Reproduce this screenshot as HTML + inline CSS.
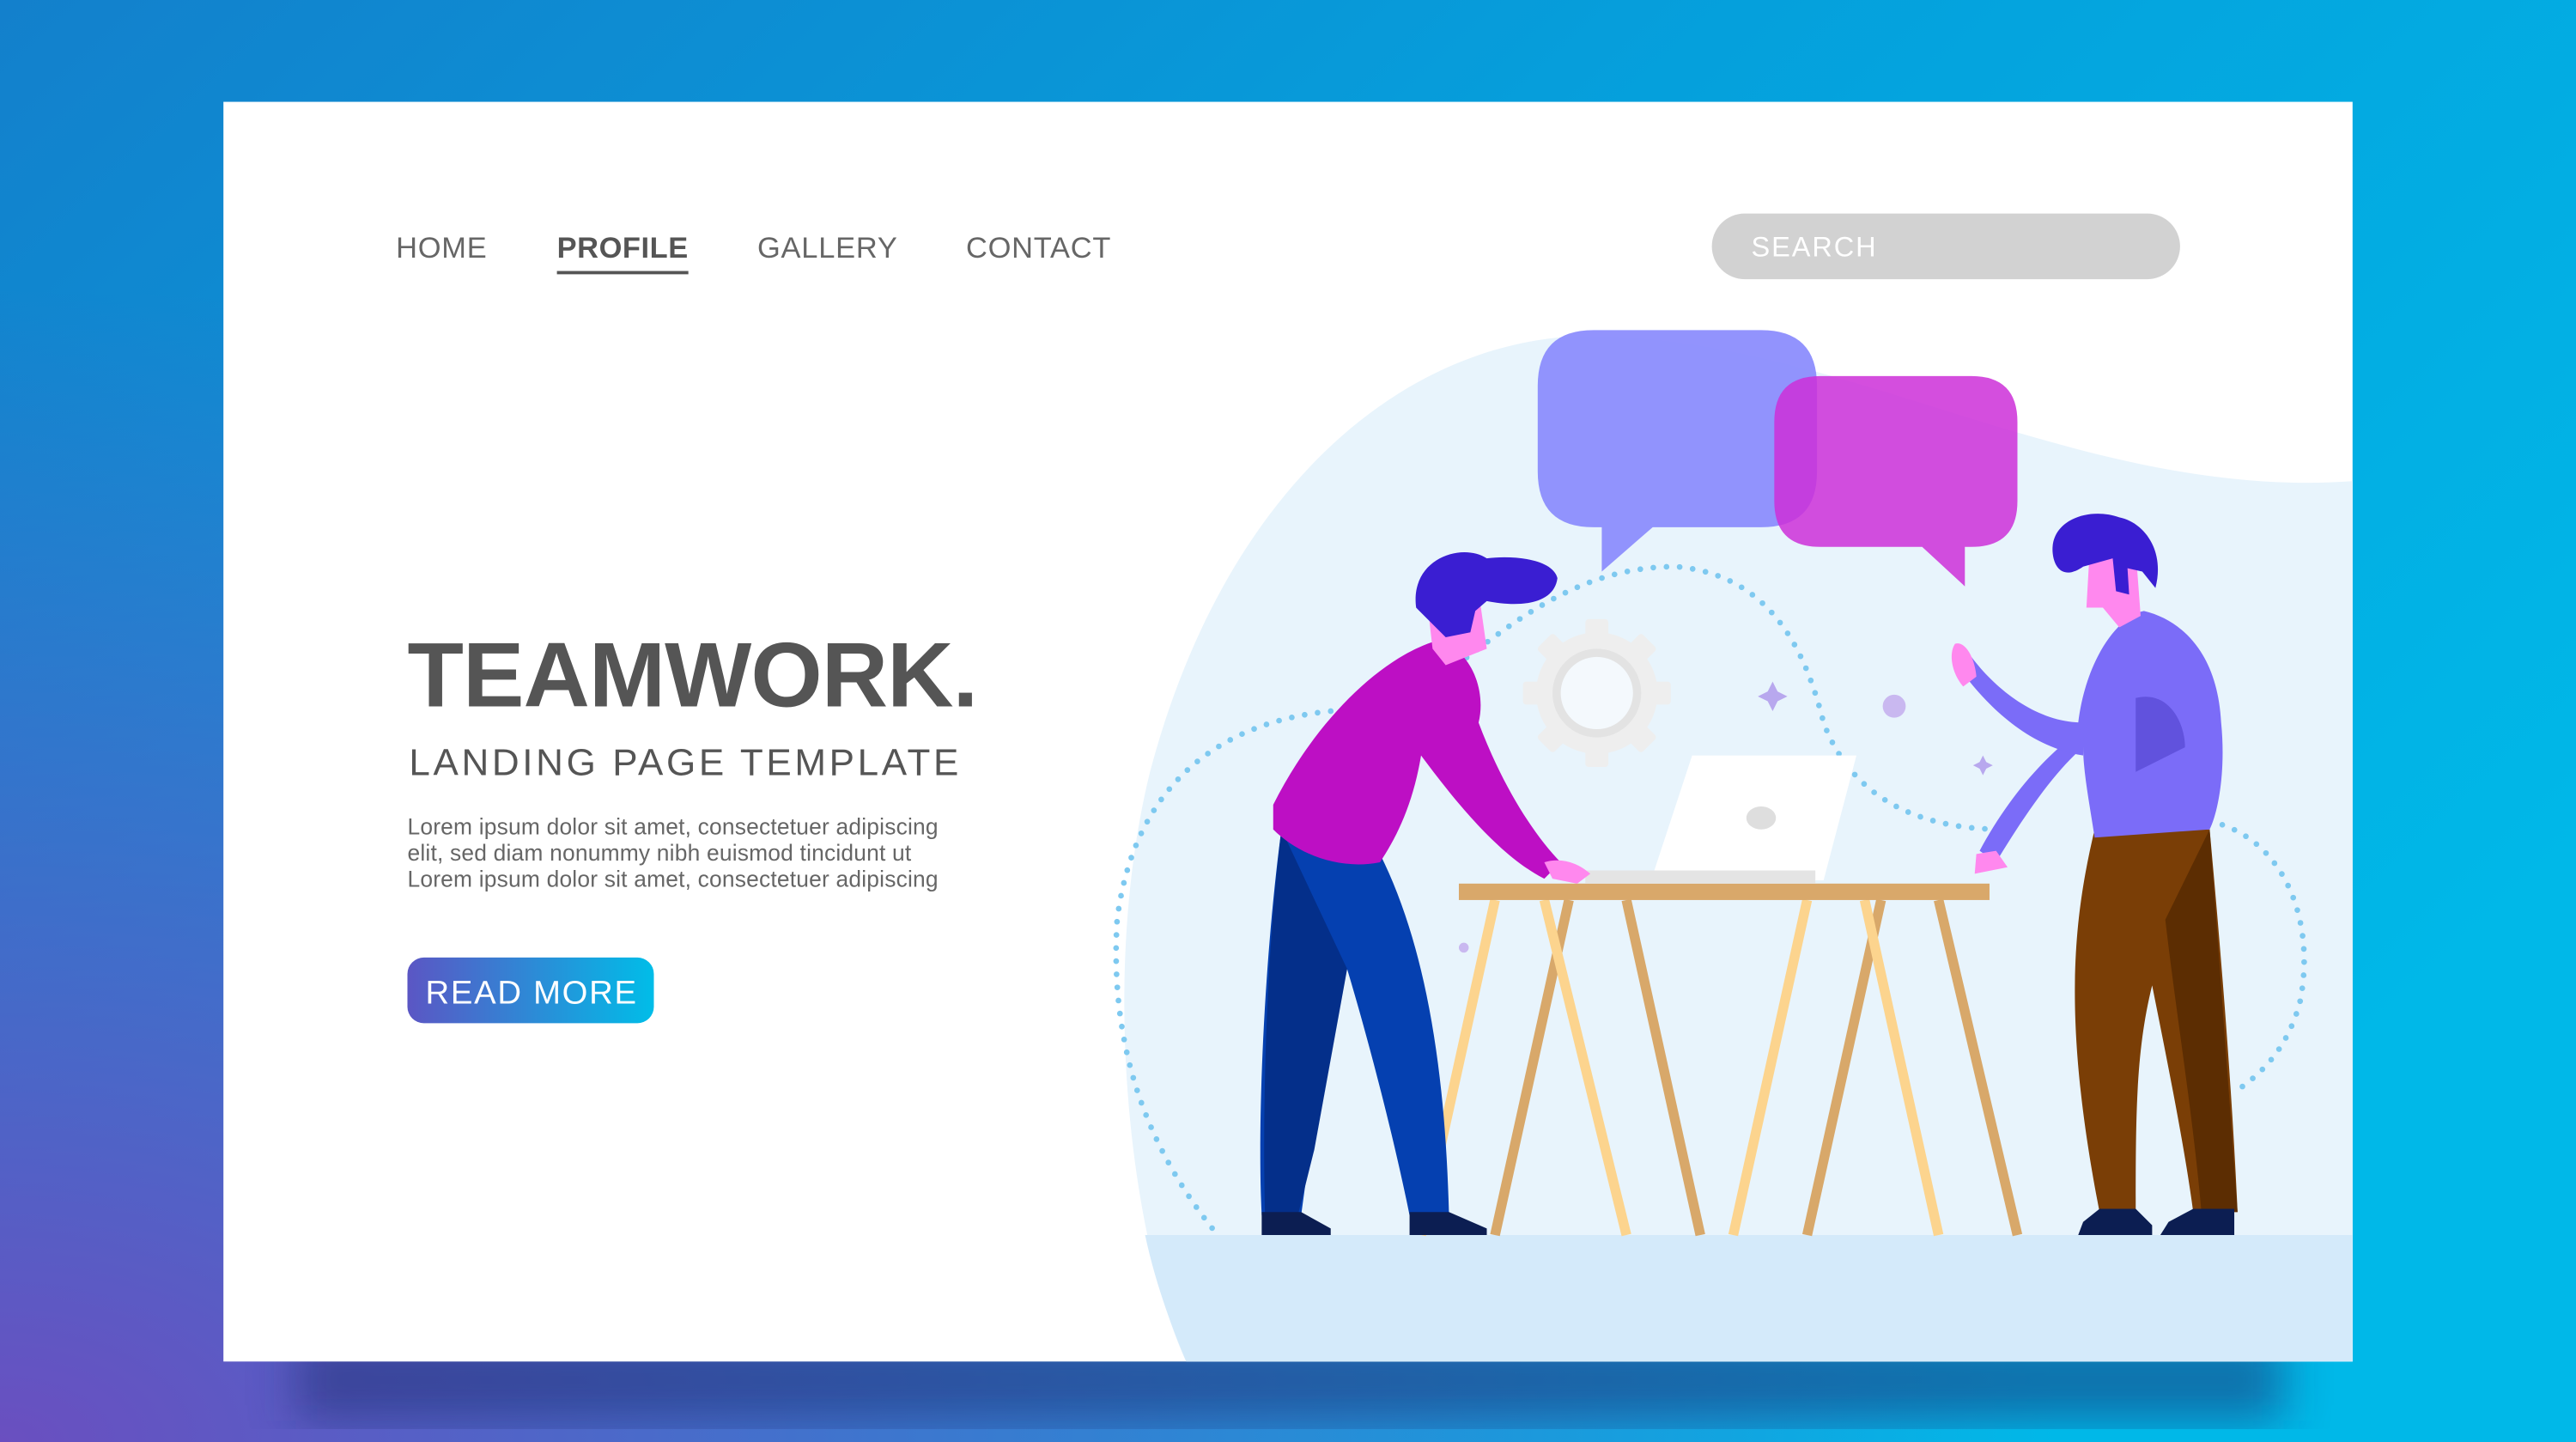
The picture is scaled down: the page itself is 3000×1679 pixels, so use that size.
<!DOCTYPE html>
<html><head><meta charset="utf-8"><style>
html,body{margin:0;padding:0;width:3000px;height:1679px;overflow:hidden;background:#0a90d4}
svg{display:block}
text{font-family:"Liberation Sans",sans-serif}
</style></head><body>
<svg width="3000" height="1679" viewBox="0 0 1568 878" preserveAspectRatio="none" xmlns="http://www.w3.org/2000/svg">
<defs>
<linearGradient id="bg" x1="0" y1="0" x2="1" y2="0.6">
<stop offset="0" stop-color="#1380cc"/><stop offset="0.5" stop-color="#05a0dc"/><stop offset="1" stop-color="#00b8e8"/></linearGradient>
<radialGradient id="bgp" cx="0" cy="1" r="0.8"><stop offset="0" stop-color="#6a4fc0"/><stop offset="1" stop-color="#6a4fc0" stop-opacity="0"/></radialGradient>
<linearGradient id="btn" x1="0" y1="0" x2="1" y2="0"><stop offset="0" stop-color="#5b56c4"/><stop offset="1" stop-color="#00bde8"/></linearGradient>
<filter id="blur"><feGaussianBlur stdDeviation="14"/></filter>
</defs>
<rect width="1568" height="878" fill="url(#bg)"/>
<rect width="1568" height="878" fill="url(#bgp)"/>
<rect x="180" y="815" width="1210" height="50" fill="#1a2a70" opacity="0.5" filter="url(#blur)"/>
<rect x="136" y="62" width="1296" height="767" fill="#ffffff"/>
<path d="M722 829 C690 760 668 600 700 470 C745 300 850 212 955 205 C1110 198 1260 305 1432 293 L1432 829 Z" fill="#e8f4fc"/>
<path d="M697 752 L1432 752 L1432 829 L722 829 C712 805 703 780 697 752 Z" fill="#d4eafa"/>
<g font-size="18" fill="#666" letter-spacing="0.4">
<text x="241" y="157">HOME</text>
<text x="339" y="157" font-weight="bold" fill="#555" letter-spacing="0.3">PROFILE</text>
<text x="461" y="157">GALLERY</text>
<text x="588" y="157">CONTACT</text>
</g>
<rect x="339" y="165" width="80" height="2" fill="#555"/>
<rect x="1042" y="130" width="285" height="40" rx="20" fill="#d2d2d2"/>
<text x="1066" y="156" font-size="17" fill="#fff" letter-spacing="1">SEARCH</text>
<text x="248" y="430" font-size="56" font-weight="bold" fill="#555" letter-spacing="-0.5">TEAMWORK.</text>
<text x="249" y="472" font-size="23" fill="#555" letter-spacing="1.9">LANDING PAGE TEMPLATE</text>
<g font-size="13.8" fill="#666" letter-spacing="0.1">
<text x="248" y="508">Lorem ipsum dolor sit amet, consectetuer adipiscing</text>
<text x="248" y="524">elit, sed diam nonummy nibh euismod tincidunt ut</text>
<text x="248" y="540">Lorem ipsum dolor sit amet, consectetuer adipiscing</text>
</g>
<rect x="248" y="583" width="150" height="40" rx="10" fill="url(#btn)"/>
<text x="259" y="611" font-size="20" fill="#fff" letter-spacing="0.9">READ MORE</text>
<g fill="none" stroke="#7ec9f0" stroke-width="3.5" stroke-linecap="round" stroke-dasharray="0 8">
<path d="M810 433 C740 440 690 480 680 560 C675 640 700 700 738 748"/>
<path d="M880 410 C920 380 960 345 1020 345 C1080 350 1100 400 1110 440 C1125 480 1160 505 1220 505"/>
<path d="M1345 500 C1390 510 1410 560 1400 610 C1392 640 1375 655 1360 665"/>
</g>
<path d="M1079 415 L1082 421 L1088 424 L1082 427 L1079 433 L1076 427 L1070 424 L1076 421Z" fill="#b8a8ee"/>
<path d="M1207 460 L1209 464 L1213 466 L1209 468 L1207 472 L1205 468 L1201 466 L1205 464Z" fill="#b8a8ee"/>
<circle cx="1153" cy="430" r="7" fill="#c9b8f0"/>
<circle cx="891" cy="577" r="3" fill="#c9b8f0"/>
<g transform="translate(972,422)" fill="#eeeeee">
<circle r="37"/>
<g><rect x="-7" y="-45" width="14" height="12" rx="2"/><rect x="-7" y="33" width="14" height="12" rx="2"/><rect x="-45" y="-7" width="12" height="14" rx="2"/><rect x="33" y="-7" width="12" height="14" rx="2"/></g>
<g transform="rotate(45)"><rect x="-7" y="-45" width="14" height="12" rx="2"/><rect x="-7" y="33" width="14" height="12" rx="2"/><rect x="-45" y="-7" width="12" height="14" rx="2"/><rect x="33" y="-7" width="12" height="14" rx="2"/></g>
<circle r="27" fill="#e3e3e3"/><circle r="22" fill="#f4f9fd"/>
</g>
<path d="M970 201 L1072 201 Q1106 201 1106 235 L1106 287 Q1106 321 1072 321 L1006 321 L975 348 L975 321 L970 321 Q936 321 936 287 L936 235 Q936 201 970 201Z" fill="#8c8dfd" opacity="0.95"/>
<path d="M1108 229 L1200 229 Q1228 229 1228 257 L1228 305 Q1228 333 1200 333 L1170 333 L1196 357 L1196 333 L1170 333 L1108 333 Q1080 333 1080 305 L1080 257 Q1080 229 1108 229Z" fill="#cc2fd8" opacity="0.85"/>
<g>
<line x1="910" y1="548" x2="865" y2="752" stroke="#fcd48e" stroke-width="6"/>
<line x1="955" y1="548" x2="910" y2="752" stroke="#d8a86a" stroke-width="6"/>
<line x1="940" y1="548" x2="990" y2="752" stroke="#fcd48e" stroke-width="6"/>
<line x1="990" y1="548" x2="1035" y2="752" stroke="#d8a86a" stroke-width="6"/>
<line x1="1100" y1="548" x2="1055" y2="752" stroke="#fcd48e" stroke-width="6"/>
<line x1="1145" y1="548" x2="1100" y2="752" stroke="#d8a86a" stroke-width="6"/>
<line x1="1135" y1="548" x2="1180" y2="752" stroke="#fcd48e" stroke-width="6"/>
<line x1="1180" y1="548" x2="1228" y2="752" stroke="#d8a86a" stroke-width="6"/>
</g>
<rect x="888" y="538" width="323" height="10" fill="#d9a86a"/>
<path d="M1030 460 L1130 460 L1110 536 L1005 536 Z" fill="#ffffff"/>
<rect x="965" y="530" width="140" height="8" fill="#e4e4e4"/>
<ellipse cx="1072" cy="498" rx="9" ry="7" fill="#dedede"/>
<path d="M780 505 C770 580 765 680 768 740 L792 740 C800 680 810 620 820 590 C835 640 850 700 858 740 L882 740 C880 660 870 580 840 520 Z" fill="#0540b0"/>
<path d="M780 505 L820 590 L800 700 L790 740 L770 740 C768 660 772 570 780 505Z" fill="#042f8a"/>
<path d="M768 738 L792 738 L810 748 L810 752 L768 752Z" fill="#0c1e52"/>
<path d="M858 738 L882 738 L905 748 L905 752 L858 752Z" fill="#0c1e52"/>
<path d="M775 490 C800 440 840 400 875 390 C895 395 905 420 900 440 C915 480 935 510 950 525 L940 535 C910 520 880 480 865 460 C860 490 850 510 840 525 C815 530 790 520 775 505Z" fill="#bd0fc4"/>
<path d="M940 525 C950 522 960 525 968 532 L960 538 L945 535Z" fill="#ff88ee"/>
<path d="M868 360 L900 360 L905 395 L880 405 L872 395Z" fill="#ff88ee"/>
<path d="M862 370 C858 340 890 330 905 340 C920 338 945 340 948 352 C946 368 925 370 905 366 L898 372 L895 385 L880 388 Z" fill="#3a1ed2"/>
<path d="M1275 505 C1262 560 1255 620 1278 738 L1300 738 C1300 680 1300 640 1310 600 C1320 650 1330 700 1335 738 L1362 738 C1358 650 1350 560 1345 505 Z" fill="#7a3e06"/>
<path d="M1318 560 L1345 505 L1362 738 L1340 738 C1335 680 1325 620 1318 560Z" fill="#5c2d02"/>
<path d="M1278 736 L1300 736 L1310 746 L1310 752 L1265 752 L1268 744Z" fill="#0c1e52"/>
<path d="M1335 736 L1360 736 L1360 752 L1315 752 L1320 744Z" fill="#0c1e52"/>
<path d="M1265 440 C1270 400 1290 375 1305 372 C1330 378 1350 400 1352 440 C1355 470 1350 495 1345 505 L1275 510 C1272 490 1268 470 1268 455 C1250 470 1230 500 1215 525 L1205 518 C1220 490 1240 465 1262 448 Z" fill="#7b6cf8"/>
<path d="M1195 410 C1210 430 1235 455 1268 460 L1268 440 C1240 440 1215 420 1200 400Z" fill="#7b6cf8"/>
<path d="M1300 425 C1320 420 1330 440 1330 455 L1300 470Z" fill="#6152dd"/>
<path d="M1190 392 C1196 390 1202 400 1203 412 L1195 418 C1188 410 1186 398 1190 392Z" fill="#ff88ee"/>
<path d="M1203 520 L1215 518 L1222 528 L1202 532Z" fill="#ff88ee"/>
<path d="M1272 335 L1300 335 L1303 375 L1290 382 L1280 370 L1270 370Z" fill="#ff88ee"/>
<path d="M1250 340 C1245 318 1270 308 1290 315 C1305 318 1318 335 1312 358 L1304 348 L1295 346 L1296 362 L1288 360 L1286 340 L1268 345 C1258 352 1252 348 1250 340Z" fill="#3a1ed2"/>
</svg>
</body></html>
